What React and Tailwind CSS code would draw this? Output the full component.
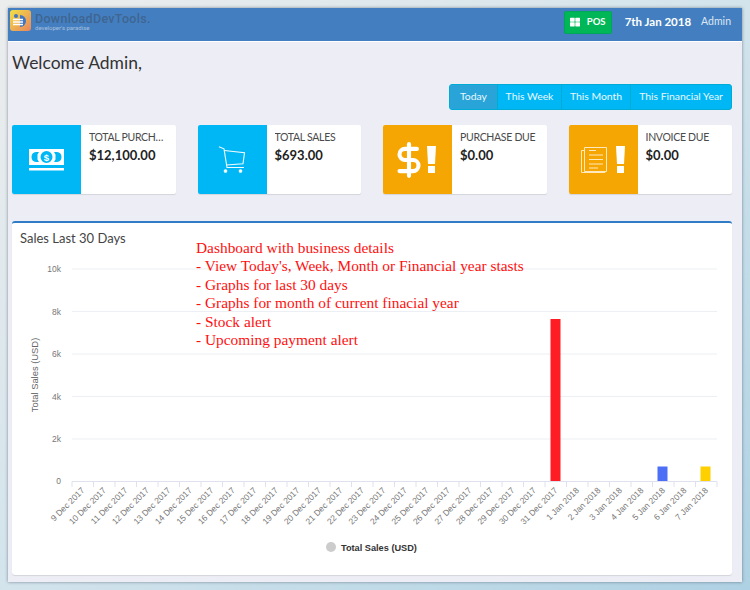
import React from 'react';
import { FaThLarge } from 'react-icons/fa';
import { DollarSign } from 'lucide-react';

const sans = "font-['Lato',sans-serif]";

const dates = [
  '9 Dec 2017', '10 Dec 2017', '11 Dec 2017', '12 Dec 2017', '13 Dec 2017', '14 Dec 2017',
  '15 Dec 2017', '16 Dec 2017', '17 Dec 2017', '18 Dec 2017', '19 Dec 2017', '20 Dec 2017',
  '21 Dec 2017', '22 Dec 2017', '23 Dec 2017', '24 Dec 2017', '25 Dec 2017', '26 Dec 2017',
  '27 Dec 2017', '28 Dec 2017', '29 Dec 2017', '30 Dec 2017', '31 Dec 2017', '1 Jan 2018',
  '2 Jan 2018', '3 Jan 2018', '4 Jan 2018', '5 Jan 2018', '6 Jan 2018', '7 Jan 2018',
];

const yTicks = [
  { label: '10k', y: 269 },
  { label: '8k', y: 311.5 },
  { label: '6k', y: 354 },
  { label: '4k', y: 396.5 },
  { label: '2k', y: 439 },
];

const bars = [
  { x: 550.5, y: 319, h: 162, color: '#ff1d25' },
  { x: 657.5, y: 466.5, h: 14.5, color: '#4d6ff5' },
  { x: 700.5, y: 466.5, h: 14.5, color: '#ffd000' },
];

const notes = [
  'Dashboard with business details',
  "- View Today's, Week, Month or Financial year stasts",
  '- Graphs for last 30 days',
  '- Graphs for month of current finacial year',
  '- Stock alert',
  '- Upcoming payment alert',
];

const Logo = () => (
  <svg width="21" height="21" viewBox="0 0 21 21" className="-mt-[3px] shrink-0">
    <defs>
      <linearGradient id="logoFill" x1="0" y1="0" x2="1" y2="1">
        <stop offset="0" stopColor="#f2e044" />
        <stop offset="1" stopColor="#e8845e" />
      </linearGradient>
    </defs>
    <rect width="21" height="21" rx="3" fill="url(#logoFill)" />
    <path d="M10 5a6 6 0 0 1 0 12z" fill="#3f76c4" />
    <circle cx="6" cy="6" r="2" fill="#3f76c4" />
    <path d="M3 9.500h10M3 12h10M3 14.500h10" stroke="#fff" strokeWidth="1.300" />
  </svg>
);

const MoneyIcon = () => (
  <svg width="35" height="22" viewBox="0 0 35 22" fill="none">
    <path fillRule="evenodd" fill="#fff" d="M0 0h35v16H0zM2.500 8a5 5 0 0 0 4.500 5h3l-1.500-2.500v-5L10 3H7a5 5 0 0 0-4.500 5zM32.500 8a5 5 0 0 1-4.500 5h-3l1.500-2.500v-5L25 3h3a5 5 0 0 1 4.500 5zM17.500 2a6 6 0 1 0 0 12 6 6 0 0 0 0-12z" />
    <text x="17.500" y="11.500" textAnchor="middle" fontSize="9.500" fontWeight="700" fill="#fff" fontFamily="Liberation Sans, sans-serif">$</text>
    <rect x="0" y="19" width="35" height="2.500" fill="#fff" />
  </svg>
);

const CartIcon = () => (
  <svg width="28" height="27" viewBox="0 0 28 27" fill="none" stroke="#f2fbff" strokeWidth="1.100">
    <path d="M1 .8l5 2 3 18.700h17" />
    <path d="M6.300 4.500l20.200 2.200-1.500 11-16.800 1.300" />
    <circle cx="7.500" cy="25" r="1.300" fill="#fff" />
    <circle cx="22.500" cy="25" r="1.300" fill="#fff" />
  </svg>
);

const PaperIcon = () => (
  <svg width="26" height="26" viewBox="0 0 26 26" fill="none" stroke="#ffe9bd" strokeWidth="1">
    <path d="M3.500.5h22v24h-22z" />
    <path d="M3.500 3.500H.5v22h23.500v-1" />
    <path d="M8 3.500h7M8 8h14M8 12.500h14M8 17h14M8 21h9" />
  </svg>
);

// old font-awesome style exclamation mark: tapered bar with a square dot
const BangIcon = () => (
  <svg width="9" height="27" viewBox="0 0 9 27" fill="#fff">
    <path d="M0 0h9l-1 18H1z" />
    <rect x="1" y="20" width="7" height="7" />
  </svg>
);

const StatCard = ({ color, icon, title, value, pad = 'pr-[6px]' }) => (
  <div className="flex h-[69px] bg-white rounded-[2px] shadow-[0_1px_1px_rgba(0,0,0,0.1)]">
    <div className={`flex w-[69px] shrink-0 items-center justify-center rounded-l-[2px] ${color}`}>{icon}</div>
    <div className={`min-w-0 flex-1 pl-2 pt-[4px] ${pad}`}>
      <p className="truncate text-[10.500px] leading-[16px] tracking-[-0.3px] text-[#4a4a4a]">{title}</p>
      <p className="mt-[1px] text-[13px] leading-[18px] font-bold text-[#222]">{value}</p>
    </div>
  </div>
);

const SalesChart = () => (
  <svg className="block w-full font-['Liberation_Sans',sans-serif]" height="325" viewBox="12 250 720 325">
    {yTicks.map((t) => (
      <g key={t.label}>
        <line x1="72" x2="717" y1={t.y} y2={t.y} stroke="#eceff3" />
        <text x="61" y={t.y + 3} textAnchor="end" fontSize="8.500" fill="#777">{t.label}</text>
      </g>
    ))}
    <text x="61" y="484" textAnchor="end" fontSize="8.500" fill="#777">0</text>
    <text transform="translate(38 375) rotate(-90)" textAnchor="middle" fontSize="9.400" fill="#666">Total Sales (USD)</text>

    {bars.map((b) => (
      <rect key={b.x} x={b.x} y={b.y} width="10" height={b.h} fill={b.color} />
    ))}

    <line x1="72" x2="717" y1="481.500" y2="481.500" stroke="#dfe2ee" />
    {dates.map((d, i) => (
      <g key={d}>
        <line x1={72 + i * 21.5} x2={72 + i * 21.5} y1="481.500" y2="487" stroke="#dfe2ee" />
        <text transform={`translate(${85 + i * 21.5} 491) rotate(-45)`} textAnchor="end" fontSize="8.500" fill="#777">{d}</text>
      </g>
    ))}
    <line x1="717" x2="717" y1="481.500" y2="487" stroke="#dfe2ee" />

    <circle cx="331" cy="547" r="5" fill="#ccc" />
    <text x="341" y="551" fontSize="9.200" fontWeight="700" fill="#333">Total Sales (USD)</text>
  </svg>
);

export default function App() {
  return (
    <div className="h-[590px] w-[750px] overflow-hidden bg-gradient-to-br from-[#eceded] via-[#d3e4ec] to-[#aed1e3] p-2 font-['Liberation_Sans',sans-serif]">
      <div className="flex h-[574px] w-[734px] flex-col bg-[#ecedf5] shadow-[0_0_3px_rgba(60,70,90,0.6)]">
        <header className="flex h-[33px] shrink-0 items-center bg-[#437fc0] pb-[5px] pl-[2px] pr-[11px]">
          <Logo />
          <div className="ml-[4px] leading-none">
            <p className="font-['Roboto',sans-serif] text-[12.500px] leading-[11px] font-medium tracking-[0.3px] text-[#3f6591]">DownloadDevTools.</p>
            <p className="font-['Roboto',sans-serif] text-[6px] leading-[8px] text-[#a7bfdc]">developer's paradise</p>
          </div>
          <div className={`ml-auto flex items-center ${sans}`}>
            <button className="flex h-[23px] w-[48px] items-center justify-center gap-[7px] rounded-[2px] border border-[#00a65a] bg-[#00b757] text-[9.500px] font-bold text-white">
              <FaThLarge size={10} />
              POS
            </button>
            <span className="ml-[13px] text-[11.500px] font-bold text-white">7th Jan 2018</span>
            <span className="ml-[10px] text-[10.500px] text-[#dbe6f3]">Admin</span>
          </div>
        </header>

        <main className={`flex min-h-0 flex-1 flex-col border-t border-white pl-1 pr-[10px] ${sans}`}>
          <h1 className="mt-[9px] text-[17.500px] leading-[24px] text-[#333]">Welcome Admin,</h1>

          <div className="mt-[9px] flex justify-end">
            <div className="flex h-[26px] overflow-hidden rounded-[3px] border border-[#00acd6] bg-[#00b7f6] text-[10.400px] text-[#eaf8ff]">
              <button className="w-[47px] bg-[#28a4d8]">Today</button>
              <button className="w-[64px] border-l border-[#00acd6]">This Week</button>
              <button className="w-[69px] border-l border-[#00acd6]">This Month</button>
              <button className="w-[101px] border-l border-[#00acd6]">This Financial Year</button>
            </div>
          </div>

          <div className="mt-[15px] grid grid-cols-4 gap-x-[22px]">
            <StatCard color="bg-[#00b7f6]" pad="pr-[12px]" icon={<MoneyIcon />} title="TOTAL PURCHASE" value="$12,100.00" />
            <StatCard color="bg-[#00b7f6]" icon={<CartIcon />} title="TOTAL SALES" value="$693.00" />
            <StatCard
              color="bg-[#f6a602]"
              icon={
                <span className="flex items-center gap-[8px]">
                  <DollarSign size={38} color="#fff" strokeWidth={2.6} className="-mx-[9px]" />
                  <BangIcon />
                </span>
              }
              title="PURCHASE DUE"
              value="$0.00"
            />
            <StatCard
              color="bg-[#f6a602]"
              icon={
                <span className="flex items-center gap-[9px]">
                  <PaperIcon />
                  <BangIcon />
                </span>
              }
              title="INVOICE DUE"
              value="$0.00"
            />
          </div>

          <section className="relative mt-[27px] flex-1 rounded-[3px] border-t-2 border-[#2f7cc6] bg-white shadow-[0_1px_1px_rgba(0,0,0,0.1)]">
            <h2 className="px-2 pt-[6px] text-[13px] leading-[19px] text-[#444]">Sales Last 30 Days</h2>
            <div className="mt-[2px]">
              <SalesChart />
            </div>
            <div className="absolute top-[16px] left-[184px] font-['Liberation_Serif',serif] text-[15.400px] leading-[18.400px] text-[#ff1010]">
              {notes.map((line) => (
                <p key={line}>{line}</p>
              ))}
            </div>
          </section>
          <div className="h-[7px] shrink-0" />
        </main>
      </div>
    </div>
  );
}
